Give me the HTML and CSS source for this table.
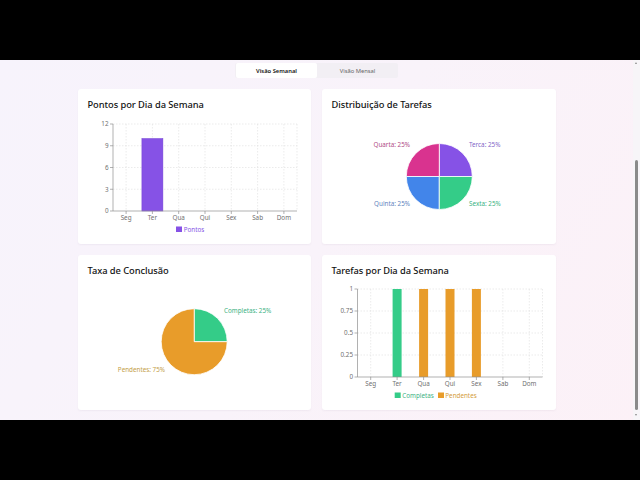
FILE: index.html
```html
<!DOCTYPE html>
<html lang="pt">
<head>
<meta charset="utf-8">
<title>Dashboard</title>
<link rel="stylesheet" href="styles.css">
</head>
<body>
<div class="letterbox"></div>
<div class="screen">
  <div class="app">
    <div class="tabs">
      <div class="tab active">Visão Semanal</div>
      <div class="tab">Visão Mensal</div>
    </div>
    <div class="grid">
      <section class="card">
        <h2 class="card-title">Pontos por Dia da Semana</h2>
        <svg class="chart" viewBox="0 0 213 127" width="213" height="127">
          <g class="grid-lines">
            <line x1="25" y1="11" x2="209" y2="11"/>
            <line x1="25" y1="32.75" x2="209" y2="32.75"/>
            <line x1="25" y1="54.5" x2="209" y2="54.5"/>
            <line x1="25" y1="76.25" x2="209" y2="76.25"/>
            <line x1="38.1" y1="11" x2="38.1" y2="98"/>
            <line x1="64.4" y1="11" x2="64.4" y2="98"/>
            <line x1="90.7" y1="11" x2="90.7" y2="98"/>
            <line x1="117" y1="11" x2="117" y2="98"/>
            <line x1="143.3" y1="11" x2="143.3" y2="98"/>
            <line x1="169.6" y1="11" x2="169.6" y2="98"/>
            <line x1="195.9" y1="11" x2="195.9" y2="98"/>
            <line x1="209" y1="11" x2="209" y2="98"/>
          </g>
          <rect x="53.9" y="25.5" width="21" height="72.5" fill="#8652e6" stroke="#7443d4" stroke-width="0.5"/>
          <g class="axis">
            <line x1="25" y1="11" x2="25" y2="98"/>
            <line x1="25" y1="98" x2="209" y2="98"/>
            <line x1="22" y1="11" x2="25" y2="11"/>
            <line x1="22" y1="32.75" x2="25" y2="32.75"/>
            <line x1="22" y1="54.5" x2="25" y2="54.5"/>
            <line x1="22" y1="76.25" x2="25" y2="76.25"/>
            <line x1="22" y1="98" x2="25" y2="98"/>
            <line x1="38.1" y1="98" x2="38.1" y2="101"/>
            <line x1="64.4" y1="98" x2="64.4" y2="101"/>
            <line x1="90.7" y1="98" x2="90.7" y2="101"/>
            <line x1="117" y1="98" x2="117" y2="101"/>
            <line x1="143.3" y1="98" x2="143.3" y2="101"/>
            <line x1="169.6" y1="98" x2="169.6" y2="101"/>
            <line x1="195.9" y1="98" x2="195.9" y2="101"/>
          </g>
          <g class="tick-y">
            <text x="20.5" y="13.2">12</text>
            <text x="20.5" y="35">9</text>
            <text x="20.5" y="56.7">6</text>
            <text x="20.5" y="78.5">3</text>
            <text x="20.5" y="100.2">0</text>
          </g>
          <g class="tick-x">
            <text x="38.1" y="107">Seg</text>
            <text x="64.4" y="107">Ter</text>
            <text x="90.7" y="107">Qua</text>
            <text x="117" y="107">Qui</text>
            <text x="143.3" y="107">Sex</text>
            <text x="169.6" y="107">Sab</text>
            <text x="195.9" y="107">Dom</text>
          </g>
          <rect x="88" y="113.5" width="6" height="5.5" fill="#8652e6"/>
          <text class="legend" x="95.7" y="119" fill="#8652e6">Pontos</text>
        </svg>
      </section>

      <section class="card">
        <h2 class="card-title">Distribuição de Tarefas</h2>
        <svg class="chart" viewBox="0 0 214 127" width="214" height="127">
          <g class="pie">
            <path d="M107.3 63.5 L140.3 63.5 A33 33 0 0 0 107.3 30.5 Z" fill="#8652e6"/>
            <path d="M107.3 63.5 L107.3 30.5 A33 33 0 0 0 74.3 63.5 Z" fill="#d9338f"/>
            <path d="M107.3 63.5 L74.3 63.5 A33 33 0 0 0 107.3 96.5 Z" fill="#4285ea"/>
            <path d="M107.3 63.5 L107.3 96.5 A33 33 0 0 0 140.3 63.5 Z" fill="#34cc88"/>
          </g>
          <text class="plabel end" x="78" y="34" fill="#b04c86">Quarta: 25%</text>
          <text class="plabel" x="137" y="34" fill="#8366c8">Terca: 25%</text>
          <text class="plabel end" x="78" y="92.5" fill="#5f84bd">Quinta: 25%</text>
          <text class="plabel" x="137" y="92.5" fill="#3cb283">Sexta: 25%</text>
        </svg>
      </section>

      <section class="card">
        <h2 class="card-title">Taxa de Conclusão</h2>
        <svg class="chart" viewBox="0 0 213 127" width="213" height="127">
          <g class="pie">
            <path d="M106.2 62.7 L139.2 62.7 A33 33 0 0 0 106.2 29.7 Z" fill="#34cc88"/>
            <path d="M106.2 62.7 L106.2 29.7 A33 33 0 1 0 139.2 62.7 Z" fill="#e89c2a"/>
          </g>
          <text class="plabel" x="136" y="34" fill="#3cb283">Completas: 25%</text>
          <text class="plabel end" x="77" y="92.5" fill="#c4a048">Pendentes: 75%</text>
        </svg>
      </section>

      <section class="card">
        <h2 class="card-title">Tarefas por Dia da Semana</h2>
        <svg class="chart" viewBox="0 0 214 127" width="214" height="127">
          <g class="grid-lines">
            <line x1="25.5" y1="10" x2="210.5" y2="10"/>
            <line x1="25.5" y1="32" x2="210.5" y2="32"/>
            <line x1="25.5" y1="54" x2="210.5" y2="54"/>
            <line x1="25.5" y1="76" x2="210.5" y2="76"/>
            <line x1="38.7" y1="10" x2="38.7" y2="98"/>
            <line x1="65.1" y1="10" x2="65.1" y2="98"/>
            <line x1="91.6" y1="10" x2="91.6" y2="98"/>
            <line x1="118" y1="10" x2="118" y2="98"/>
            <line x1="144.4" y1="10" x2="144.4" y2="98"/>
            <line x1="170.9" y1="10" x2="170.9" y2="98"/>
            <line x1="197.3" y1="10" x2="197.3" y2="98"/>
            <line x1="210.5" y1="10" x2="210.5" y2="98"/>
          </g>
          <rect x="60.6" y="10" width="9" height="88" fill="#34cc88"/>
          <rect x="87.1" y="10" width="9" height="88" fill="#e89c2a"/>
          <rect x="113.5" y="10" width="9" height="88" fill="#e89c2a"/>
          <rect x="139.9" y="10" width="9" height="88" fill="#e89c2a"/>
          <g class="axis">
            <line x1="25.5" y1="10" x2="25.5" y2="98"/>
            <line x1="25.5" y1="98" x2="210.5" y2="98"/>
            <line x1="22.5" y1="10" x2="25.5" y2="10"/>
            <line x1="22.5" y1="32" x2="25.5" y2="32"/>
            <line x1="22.5" y1="54" x2="25.5" y2="54"/>
            <line x1="22.5" y1="76" x2="25.5" y2="76"/>
            <line x1="22.5" y1="98" x2="25.5" y2="98"/>
            <line x1="38.7" y1="98" x2="38.7" y2="101"/>
            <line x1="65.1" y1="98" x2="65.1" y2="101"/>
            <line x1="91.6" y1="98" x2="91.6" y2="101"/>
            <line x1="118" y1="98" x2="118" y2="101"/>
            <line x1="144.4" y1="98" x2="144.4" y2="101"/>
            <line x1="170.9" y1="98" x2="170.9" y2="101"/>
            <line x1="197.3" y1="98" x2="197.3" y2="101"/>
          </g>
          <g class="tick-y">
            <text x="21" y="12.2">1</text>
            <text x="21" y="34.2">0.75</text>
            <text x="21" y="56.2">0.5</text>
            <text x="21" y="78.2">0.25</text>
            <text x="21" y="100.2">0</text>
          </g>
          <g class="tick-x">
            <text x="38.7" y="107">Seg</text>
            <text x="65.1" y="107">Ter</text>
            <text x="91.6" y="107">Qua</text>
            <text x="118" y="107">Qui</text>
            <text x="144.4" y="107">Sex</text>
            <text x="170.9" y="107">Sab</text>
            <text x="197.3" y="107">Dom</text>
          </g>
          <rect x="62.7" y="113.5" width="6" height="5.5" fill="#34cc88"/>
          <text class="legend" x="70.3" y="119" fill="#3cb283">Completas</text>
          <rect x="106" y="113.5" width="6" height="5.5" fill="#e89c2a"/>
          <text class="legend" x="113.3" y="119" fill="#d49c3a">Pendentes</text>
        </svg>
      </section>
    </div>
  </div>
  <div class="scrollbar">
    <div class="arrow up"></div>
    <div class="thumb"></div>
    <div class="arrow down"></div>
  </div>
</div>
<div class="letterbox"></div>
</body>
</html>
```

FILE: styles.css
```css
html, body {
  margin: 0;
  padding: 0;
  background: #000;
}

body {
  font-family: "Noto Sans", "Open Sans", sans-serif;
  width: 640px;
  height: 480px;
  overflow: hidden;
}

.letterbox {
  height: 60px;
  background: #000;
}

.screen {
  position: relative;
  height: 360px;
  overflow: hidden;
  background: linear-gradient(120deg, #f7f3fc 0%, #f9f3fa 50%, #fcf1f7 100%);
}

.app {
  width: 633px;
  display: flex;
  flex-direction: column;
  align-items: center;
  padding-top: 3px;
}

.tabs {
  display: flex;
  height: 15px;
  background: #f2eff4;
  border-radius: 2px;
  padding-left: 1px;
}

.tab {
  width: 81px;
  display: flex;
  align-items: center;
  justify-content: center;
  font-size: 5.8px;
  color: #666;
  border-radius: 2px;
}

.tab.active {
  background: #fff;
  color: #111;
  font-weight: 600;
}

.grid {
  margin-top: 11px;
  display: grid;
  grid-template-columns: 233px 234px;
  grid-auto-rows: 155px;
  gap: 11px 11px;
}

.card {
  background: #fff;
  border-radius: 3px;
  box-shadow: 0 1px 2px rgba(90, 60, 110, 0.06);
  padding: 9px 10px 0;
  box-sizing: border-box;
}

.card-title {
  margin: 0;
  font-size: 9.3px;
  line-height: 14px;
  font-weight: 500;
  color: #111;
  letter-spacing: -0.05px;
}

.chart {
  display: block;
  margin-top: 1px;
  overflow: visible;
}

.chart text {
  font-family: "Noto Sans", "Open Sans", sans-serif;
  font-size: 6.3px;
}

.grid-lines line {
  stroke: #dedede;
  stroke-width: 0.6;
  stroke-dasharray: 1.5 1.5;
}

.axis line {
  stroke: #8f8f8f;
  stroke-width: 0.7;
}

.tick-y text {
  fill: #707070;
  text-anchor: end;
}

.tick-x text {
  fill: #707070;
  text-anchor: middle;
}

.pie path {
  stroke: #fff;
  stroke-width: 0.8;
}

.plabel.end {
  text-anchor: end;
}

.scrollbar {
  position: absolute;
  top: 0;
  right: 0;
  bottom: 0;
  width: 7px;
  background: #f7f5f8;
}

.thumb {
  position: absolute;
  left: 2px;
  top: 100px;
  width: 3px;
  height: 250px;
  background: #8a8a8a;
  border-radius: 2px;
}

.arrow {
  position: absolute;
  left: 2px;
  width: 0;
  height: 0;
  border-left: 1.5px solid transparent;
  border-right: 1.5px solid transparent;
}

.arrow.up {
  top: 2px;
  border-bottom: 2px solid #8a8a8a;
}

.arrow.down {
  bottom: 4px;
  border-top: 2px solid #8a8a8a;
}
```
